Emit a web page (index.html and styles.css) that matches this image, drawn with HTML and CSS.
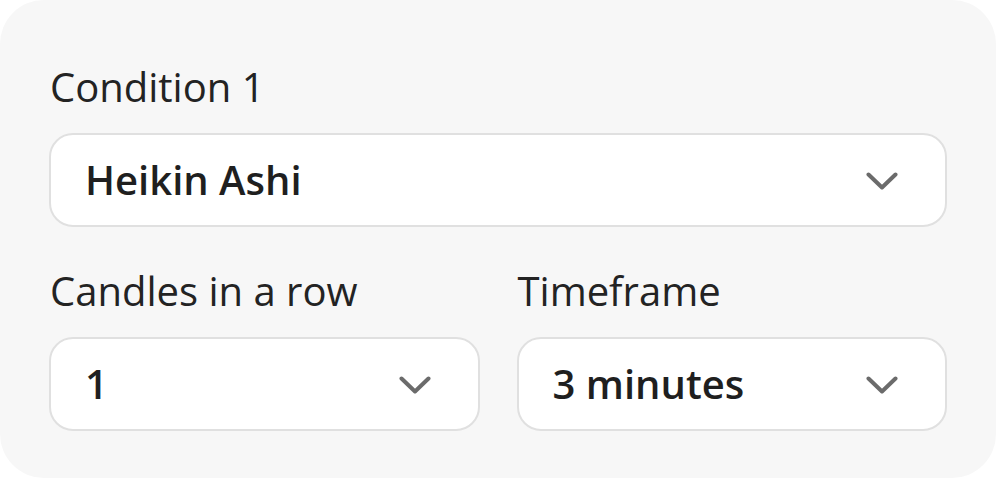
FILE: index.html
```html
<!DOCTYPE html>
<html>
<head>
<meta charset="utf-8">
<link rel="stylesheet" href="styles.css">
</head>
<body>
<div class="card">
  <div class="field">
    <div class="label">Condition 1</div>
    <div class="select">
      <span class="value">Heikin Ashi</span>
      <svg class="chev" width="32" height="18" viewBox="0 0 32 18"><polyline points="2.5,2.5 16,15.5 29.5,2.5" fill="none" stroke="#6b6b6b" stroke-width="4" stroke-linecap="round" stroke-linejoin="round"/></svg>
    </div>
  </div>
  <div class="row">
    <div class="field">
      <div class="label">Candles in a row</div>
      <div class="select">
        <span class="value">1</span>
        <svg class="chev" width="32" height="18" viewBox="0 0 32 18"><polyline points="2.5,2.5 16,15.5 29.5,2.5" fill="none" stroke="#6b6b6b" stroke-width="4" stroke-linecap="round" stroke-linejoin="round"/></svg>
      </div>
    </div>
    <div class="field">
      <div class="label">Timeframe</div>
      <div class="select">
        <span class="value">3 minutes</span>
        <svg class="chev" width="32" height="18" viewBox="0 0 32 18"><polyline points="2.5,2.5 16,15.5 29.5,2.5" fill="none" stroke="#6b6b6b" stroke-width="4" stroke-linecap="round" stroke-linejoin="round"/></svg>
      </div>
    </div>
  </div>
</div>
</body>
</html>
```
FILE: styles.css
```css
html, body {
  margin: 0;
  padding: 0;
  background: #ffffff;
}
body {
  font-family: "Open Sans", "Noto Sans", sans-serif;
  color: #222222;
}
.card {
  width: 996px;
  box-sizing: border-box;
  background: #f7f7f7;
  border-radius: 44px;
  padding: 60px 49px 47px 49px;
  display: flex;
  flex-direction: column;
  gap: 37px;
}
.field {
  display: flex;
  flex-direction: column;
  gap: 19px;
  min-width: 0;
}
.row {
  display: grid;
  grid-template-columns: 1fr 1fr;
  gap: 37px;
}
.label {
  font-size: 40px;
  line-height: 54px;
  font-weight: 400;
  color: #232323;
  padding-left: 1px;
}
.select {
  height: 94px;
  box-sizing: border-box;
  background: #ffffff;
  border: 2px solid #e0e0e0;
  border-radius: 24px;
  display: flex;
  align-items: center;
  justify-content: space-between;
  padding: 0 47px 0 34px;
}
.value {
  font-size: 40px;
  line-height: 54px;
  font-weight: 600;
  color: #1f1f1f;
}
.chev {
  display: block;
  flex: none;
  margin-top: 2px;
}
```
